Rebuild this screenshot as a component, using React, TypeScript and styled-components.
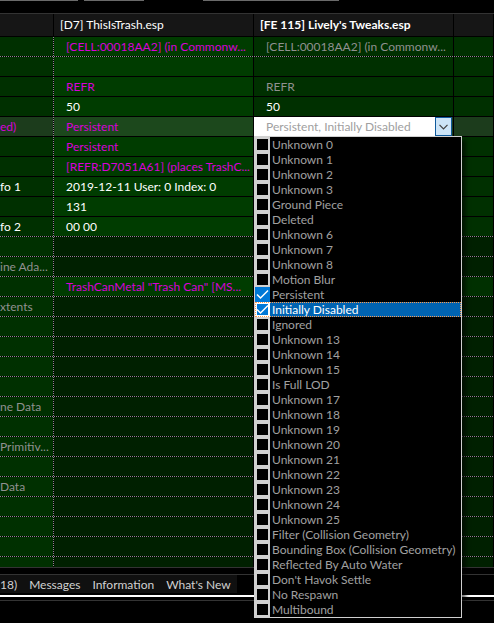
import React from "react";
import styled, { createGlobalStyle } from "styled-components";

const Global = createGlobalStyle`
  *, *::before, *::after { box-sizing: border-box; }
  html, body { margin: 0; background: #000; }
  body, button, input, table { font-family: Lato, "Open Sans", sans-serif; font-size: 12px; }
`;

const Page = styled.main`
  background: #000;
  min-height: 100vh;
`;

const TopStrip = styled.div`
  display: flex;
  height: 14px;
  border-bottom: 1px solid #333;
`;

const TopEdge = styled.span<{ $width: number; $gap: number }>`
  width: ${(p) => p.$width}px;
  height: 1px;
  margin-right: ${(p) => p.$gap}px;
  background: #6a6a6a;
`;

const GridPane = styled.div`
  border-bottom: 1px solid #333;
`;

const Grid = styled.table`
  width: 100%;
  table-layout: fixed;
  border-collapse: separate;
  border-spacing: 0;
`;

const Column = styled.col<{ $width?: number }>`
  width: ${(p) => (p.$width ? `${p.$width}px` : "auto")};
`;

const HeadCell = styled.th<{ $strong?: boolean }>`
  height: 23px;
  padding: 0 6px;
  background: #161616;
  border-bottom: 1px solid #000;
  border-right: 1px solid #000;
  color: #fff;
  font-weight: ${(p) => (p.$strong ? 700 : 400)};
  line-height: 22px;
  text-align: left;
  white-space: nowrap;
`;

type Line = "dotted" | "solid";
const dotsX = "repeating-linear-gradient(90deg, #8f858f 0 1px, #000 1px 2px)";
const dotsY = "repeating-linear-gradient(180deg, #8f858f 0 1px, #000 1px 2px)";
const solid = "linear-gradient(#000, #000)";

const Cell = styled.td<{ $bg: string; $fg: string; $line: Line; $side: Line; $label?: boolean; $short?: boolean }>`
  height: ${(p) => (p.$short ? 10 : 20)}px;
  padding: ${(p) => (p.$label ? "0 6px 1px 0" : "0 8px 1px 12px")};
  background:
    ${(p) => (p.$short ? "" : `${p.$line === "dotted" ? dotsX : solid} left bottom / 100% 1px no-repeat,`)}
    ${(p) => (p.$side === "dotted" ? dotsY : solid)} right top / 1px 100% no-repeat,
    ${(p) => p.$bg};
  color: ${(p) => p.$fg};
  line-height: 19px;
  white-space: nowrap;
`;

const EditCell = styled(Cell)`
  position: relative;
  padding: 0;
`;

const Combo = styled.div`
  display: flex;
  height: 19px;
  margin: 0 2px 1px 0;
  background: #fff;
`;

const ComboInput = styled.input`
  flex: 1;
  min-width: 0;
  padding: 0 0 0 12px;
  border: 0;
  background: #fff;
  color: #a0a0a0;
  outline: none;
`;

const ComboButton = styled.button`
  display: grid;
  place-items: center;
  width: 17px;
  padding: 0;
  border: 1px solid #0f5a9c;
  background: #cce4f7;
`;

const Menu = styled.div`
  position: absolute;
  z-index: 2;
  top: 19px;
  left: 0;
  width: 208px;
  border: 1px solid #d0d0d0;
  background: #000;
  box-shadow: 4px 4px 4px rgba(0, 0, 0, 0.55);
`;

const Option = styled.label<{ $active?: boolean }>`
  display: flex;
  align-items: center;
  height: 15px;
  background: ${(p) => (p.$active ? "#0063b1" : "#000")};
  color: ${(p) => (p.$active ? "#fff" : "#a0a0a0")};
  line-height: 15px;
  white-space: nowrap;
  position: relative;

  &::after {
    content: "";
    position: absolute;
    inset: 0;
    border: ${(p) => (p.$active ? "1px dotted #ff9c4e" : "0")};
    pointer-events: none;
  }
`;

const CheckSlot = styled.span<{ $checked?: boolean; $active?: boolean }>`
  position: relative;
  display: grid;
  flex: none;
  place-items: center;
  width: 15px;
  height: 15px;
  margin-right: 2px;
  background: ${(p) => (p.$active ? "#fff" : p.$checked ? "#0078d7" : "#d0d0d0")};
`;

const CheckInput = styled.input`
  appearance: none;
  width: 11px;
  height: 11px;
  margin: 0;
  background: #000;
  &:checked { background: #0078d7; }
`;

const Tick = styled.svg`
  position: absolute;
  inset: 0;
  pointer-events: none;
`;

const TabBar = styled.nav`
  display: flex;
  height: 23px;
  margin-top: 6px;
  border-top: 1px solid #333;
  border-bottom: 2px solid #fff;
`;

const Tab = styled.button<{ $cut?: boolean }>`
  height: 18px;
  padding: ${(p) => (p.$cut ? "0 6px 0 0" : "0 6px")};
  border: 0;
  background: #101010;
  color: #d0d0d0;
  line-height: 17px;
  white-space: nowrap;
`;

const BottomLine = styled.div`
  margin-top: 3px;
  border-top: 1px solid #333;
`;

const pink = "#d800d8";
const gray = "#909090";
const white = "#fff";

type Row = {
  label?: string;
  labelColor?: string;
  a?: string;
  aColor?: string;
  b?: string;
  bColor?: string;
  dotted?: boolean;
  dim?: boolean;
  selected?: boolean;
  short?: boolean;
};

const empty: Row = { dotted: true, dim: true };

const rows: Row[] = [
  { a: "[CELL:00018AA2] (in Commonw...", aColor: pink, b: "[CELL:00018AA2] (in Commonw...", dotted: true },
  {},
  { a: "REFR", aColor: pink, b: "REFR" },
  { a: "50", b: "50", bColor: white },
  { label: "ed)", labelColor: pink, a: "Persistent", aColor: pink, selected: true },
  { a: "Persistent", aColor: pink },
  { a: "[REFR:D7051A61] (places TrashC...", aColor: pink },
  { label: "fo 1", labelColor: white, a: "2019-12-11 User: 0 Index: 0" },
  { a: "131" },
  { label: "fo 2", labelColor: white, a: "00 00", dotted: true },
  empty,
  { ...empty, label: "ine Ada..." },
  { a: "TrashCanMetal \"Trash Can\" [MS...", aColor: pink, dotted: true },
  { ...empty, label: "xtents" },
  empty,
  empty,
  empty,
  empty,
  { ...empty, label: "ne Data" },
  empty,
  { ...empty, label: "Primitiv..." },
  empty,
  { ...empty, label: "Data" },
  empty,
  empty,
  empty,
  { ...empty, short: true },
];

const flags = [
  "Unknown 0", "Unknown 1", "Unknown 2", "Unknown 3", "Ground Piece", "Deleted",
  "Unknown 6", "Unknown 7", "Unknown 8", "Motion Blur", "Persistent", "Initially Disabled",
  "Ignored", "Unknown 13", "Unknown 14", "Unknown 15", "Is Full LOD", "Unknown 17",
  "Unknown 18", "Unknown 19", "Unknown 20", "Unknown 21", "Unknown 22", "Unknown 23",
  "Unknown 24", "Unknown 25", "Filter (Collision Geometry)", "Bounding Box (Collision Geometry)",
  "Reflected By Auto Water", "Don't Havok Settle", "No Respawn", "Multibound",
];
const chosen = ["Persistent", "Initially Disabled"];

function FlagMenu() {
  return (
    <Menu>
      {flags.map((flag) => {
        const checked = chosen.includes(flag);
        const active = flag === "Initially Disabled";
        return (
          <Option key={flag} $active={active}>
            <CheckSlot $checked={checked} $active={active}>
              <CheckInput type="checkbox" defaultChecked={checked} />
              {checked && (
                <Tick width="15" height="15" viewBox="0 0 15 15" fill="none" stroke="#fff" strokeWidth="1.5">
                  <path d="M2 7.5 L5.5 11 L13 3.5" />
                </Tick>
              )}
            </CheckSlot>
            {flag}
          </Option>
        );
      })}
    </Menu>
  );
}

export default function App() {
  return (
    <Page>
      <Global />
      <TopStrip>
        <TopEdge $width={78} $gap={6} />
        <TopEdge $width={60} $gap={59} />
        <TopEdge $width={136} $gap={0} />
      </TopStrip>
      <GridPane>
        <Grid>
          <colgroup>
            <Column $width={54} />
            <Column $width={200} />
            <Column $width={200} />
            <Column />
          </colgroup>
          <thead>
            <tr>
              <HeadCell />
              <HeadCell>[D7] ThisIsTrash.esp</HeadCell>
              <HeadCell $strong>[FE 115] Lively's Tweaks.esp</HeadCell>
              <HeadCell />
            </tr>
          </thead>
          <tbody>
            {rows.map((r, i) => {
              const line: Line = r.dotted ? "dotted" : "solid";
              const label = r.selected ? "#1c3c1c" : "#003000";
              const main = r.selected ? "#1c481c" : r.dim ? "#002000" : "#003c00";
              const other = r.selected ? "#1c3c1c" : r.dim ? "#002000" : "#003000";
              const shared = { $line: line, $short: r.short };
              return (
                <tr key={i}>
                  <Cell {...shared} $label $bg={label} $fg={r.labelColor ?? gray} $side="dotted">{r.label}</Cell>
                  <Cell {...shared} $bg={main} $fg={r.aColor ?? white} $side="solid">{r.a}</Cell>
                  {r.selected ? (
                    <EditCell {...shared} $bg={other} $fg={gray} $side="solid">
                      <Combo>
                        <ComboInput aria-label="Record flags" defaultValue="Persistent, Initially Disabled" />
                        <ComboButton aria-label="Open flags">
                          <svg width="9" height="6" viewBox="0 0 9 6" fill="none" stroke="#404040" strokeWidth="1.2">
                            <path d="M0.5 0.8 L4.5 4.8 L8.5 0.8" />
                          </svg>
                        </ComboButton>
                      </Combo>
                      <FlagMenu />
                    </EditCell>
                  ) : (
                    <Cell {...shared} $bg={other} $fg={r.bColor ?? gray} $side="solid">{r.b}</Cell>
                  )}
                  <Cell {...shared} $bg={other} $fg={gray} $side="solid" />
                </tr>
              );
            })}
          </tbody>
        </Grid>
      </GridPane>
      <TabBar>
        <Tab $cut>18)</Tab>
        <Tab>Messages</Tab>
        <Tab>Information</Tab>
        <Tab>What's New</Tab>
      </TabBar>
      <BottomLine />
    </Page>
  );
}
